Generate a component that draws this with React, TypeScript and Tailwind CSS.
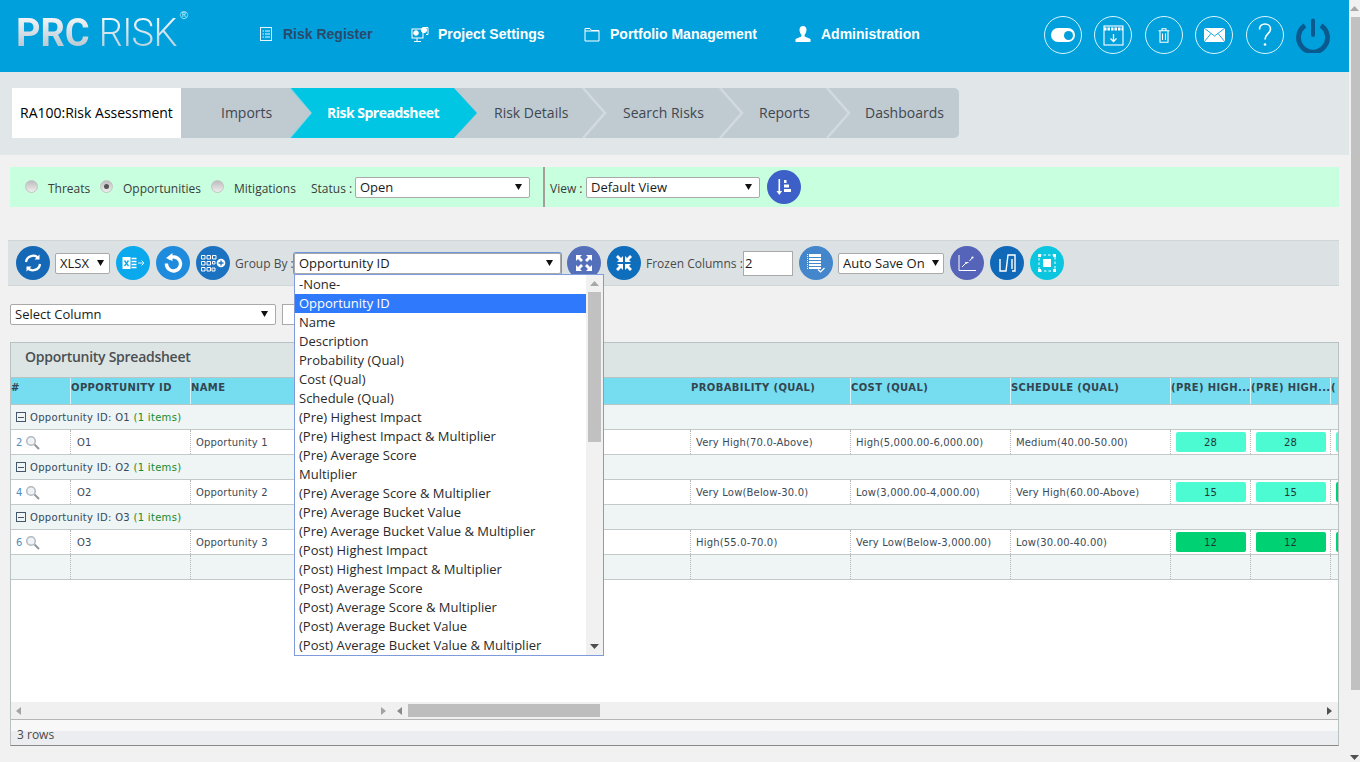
import React from "react";

const OS = "font-['Open_Sans',sans-serif]";

function Select({ value, className, arrowRight = "right-[8px]" }: { value: string; className: string; arrowRight?: string }) {
  return (
    <div className={`relative h-[21px] shrink-0 ${className}`}>
      <select
        defaultValue={value}
        className={`block w-full h-full appearance-none bg-white border border-[#a9a9a9] rounded-[2px] pl-[4px] pb-[1px] text-[13px] text-[#1a1a1a] ${OS}`}
      >
        <option>{value}</option>
      </select>
      <svg className={`absolute top-[7px] pointer-events-none ${arrowRight}`} width="7" height="6" viewBox="0 0 7 6">
        <path d="M0 0h7L3.500 6z" fill="#111" />
      </svg>
    </div>
  );
}

function Round({ color, children, className = "" }: { color: string; children: React.ReactNode; className?: string }) {
  return (
    <button className={`w-[34px] h-[34px] shrink-0 rounded-full flex items-center justify-center ${color} ${className}`}>
      {children}
    </button>
  );
}

function Radio({ on }: { on?: boolean }) {
  return (
    <span className="w-[13px] h-[13px] rounded-full border border-[#c4c4c4] bg-gradient-to-b from-[#bdbdbd] to-[#eeeeee] flex items-center justify-center shrink-0 -mt-[2px]">
      {on && <span className="w-[5px] h-[5px] rounded-full bg-[#555]" />}
    </span>
  );
}

function HeadCircle({ children }: { children: React.ReactNode }) {
  return (
    <button className="w-[38px] h-[38px] shrink-0 rounded-full border-[1.500px] border-[#d8f6ff] flex items-center justify-center">
      {children}
    </button>
  );
}

function Tab({ label, width, pad, active, lineColor = "#d2dae0", last }: { label: string; width: string; pad: string; active?: boolean; lineColor?: string; last?: boolean }) {
  return (
    <div className={`relative h-full flex items-center shrink-0 ${width} ${pad} ${active ? "z-10" : ""}`}>
      {active && (
        <svg className="absolute left-0 top-0" width="187" height="50" viewBox="0 0 187 50">
          <path d="M0 0H163L186 25L163 50H0L21 25z" fill="#00c6e3" />
        </svg>
      )}
      <span className={`relative -mt-[2px] text-[14px] whitespace-nowrap ${OS} ${active ? "text-white font-bold tracking-[-0.5px]" : "text-[#3f4750] font-medium tracking-[0px]"}`}>{label}</span>
      {!last && !active && (
        <svg className="absolute -right-[25px] top-0 z-[5]" width="26" height="50" viewBox="0 0 26 50">
          <path d="M1 0L23 25L1 50" fill="none" stroke={lineColor} strokeWidth="2.500" />
        </svg>
      )}
    </div>
  );
}

const cols = [
  "w-[60px]",
  "w-[120px]",
  "w-[160px]",
  "w-[340px]",
  "w-[160px]",
  "w-[160px]",
  "w-[160px]",
  "w-[80px]",
  "w-[80px]",
  "w-[7px]",
];

const heads = ["#", "OPPORTUNITY ID", "NAME", "", "PROBABILITY (QUAL)", "COST (QUAL)", "SCHEDULE (QUAL)", "(PRE) HIGH...", "(PRE) HIGH...", "("];

const DV = "font-['DejaVu_Sans',Verdana,sans-serif]";

function Group({ id }: { id: string }) {
  return (
    <div className="h-[25px] shrink-0 bg-[#eff4f4] border-b border-[#c4c9c9] flex items-center pl-[5px]">
      <span className="w-[10px] h-[10px] border border-[#46566a] flex items-center justify-center mr-[4px]">
        <span className="w-[6px] h-px bg-[#46566a]" />
      </span>
      <span className={`text-[10px] tracking-[0.3px] text-[#32495c] ${DV}`}>
        Opportunity ID: {id} <span className="text-[#168a2a]">(1 items)</span>
      </span>
    </div>
  );
}

function Mag() {
  return (
    <svg width="15" height="15" viewBox="0 0 15 15" className="ml-[2px]">
      <circle cx="6" cy="6" r="4.300" fill="#eef3f7" stroke="#b4b9bf" strokeWidth="1.500" />
      <path d="M9.500 9.500L14 14" stroke="#8f969c" strokeWidth="2" />
    </svg>
  );
}

function DataRow({ n, id, name, prob, cost, sched, val, color, last }: { n: string; id: string; name: string; prob: string; cost: string; sched: string; val: string; color: string; last: string }) {
  const cell = `h-full border-r border-dotted border-[#b5b5b5] shrink-0 flex items-center text-[10px] tracking-[0.17px] text-[#3c4a57] ${DV}`;
  return (
    <div className="h-[25px] shrink-0 bg-white border-b border-[#c4c9c9] flex">
      <div className={`${cell} ${cols[0]} pl-[5px]`}>
        <span className="text-[#4a8fc0]">{n}</span>
        <Mag />
      </div>
      <div className={`${cell} ${cols[1]} pl-[6px]`}>{id}</div>
      <div className={`${cell} ${cols[2]} pl-[5px]`}>{name}</div>
      <div className={`${cell} ${cols[3]} pl-[5px]`} />
      <div className={`${cell} ${cols[4]} pl-[5px]`}>{prob}</div>
      <div className={`${cell} ${cols[5]} pl-[5px]`}>{cost}</div>
      <div className={`${cell} ${cols[6]} pl-[5px]`}>{sched}</div>
      <div className={`${cell} ${cols[7]} justify-center`}>
        <span className={`w-[70px] h-[20px] rounded-[2px] flex items-center justify-center text-[#1d3a3a] ${color}`}>{val}</span>
      </div>
      <div className={`${cell} ${cols[8]} justify-center`}>
        <span className={`w-[70px] h-[20px] rounded-[2px] flex items-center justify-center text-[#1d3a3a] ${color}`}>{val}</span>
      </div>
      <div className={`h-full shrink-0 overflow-hidden pl-[5px] flex items-center ${cols[9]}`}>
        <span className={`w-[2px] shrink-0 h-[20px] rounded-l-[2px] ${last}`} />
      </div>
    </div>
  );
}

const options = [
  "-None-",
  "Opportunity ID",
  "Name",
  "Description",
  "Probability (Qual)",
  "Cost (Qual)",
  "Schedule (Qual)",
  "(Pre) Highest Impact",
  "(Pre) Highest Impact & Multiplier",
  "(Pre) Average Score",
  "Multiplier",
  "(Pre) Average Score & Multiplier",
  "(Pre) Average Bucket Value",
  "(Pre) Average Bucket Value & Multiplier",
  "(Post) Highest Impact",
  "(Post) Highest Impact & Multiplier",
  "(Post) Average Score",
  "(Post) Average Score & Multiplier",
  "(Post) Average Bucket Value",
  "(Post) Average Bucket Value & Multiplier",
];

function NavItem({ icon, label, active, gap }: { icon: React.ReactNode; label: string; active?: boolean; gap: string }) {
  return (
    <div className={`flex items-center ${gap}`}>
      <span className="w-[20px] h-[20px] flex items-center justify-center shrink-0">{icon}</span>
      <span className={`text-[14px] font-bold whitespace-nowrap font-['Liberation_Sans',Arial,sans-serif] ${active ? "text-[#2b4a6b]" : "text-white"}`}>{label}</span>
    </div>
  );
}

export default function App() {
  return (
    <div className={`w-[1360px] h-[762px] overflow-hidden flex bg-[#f1f1f1] ${OS}`}>
      <div className="w-[1349px] shrink-0 flex flex-col">
        {/* Header */}
        <header className="h-[72px] shrink-0 bg-[#00a0dc] flex items-center relative">
          <div className="w-[256px] shrink-0 pl-[16px] -mt-[6px] flex items-start">
            <span className="text-[38px] leading-[44px] font-bold text-transparent bg-clip-text bg-gradient-to-b from-white to-[#a9bcc8] font-['Roboto',sans-serif]">PRC</span>
            <span className="text-[38px] leading-[44px] font-light tracking-[-0.7px] text-transparent bg-clip-text bg-gradient-to-b from-white to-[#a9c8d8] ml-[9px] font-['Roboto',sans-serif]">RISK</span>
            <span className="text-[11px] leading-[11px] text-[#d5eef8] -mt-[1px] ml-[3px] font-['Liberation_Sans',sans-serif]">®</span>
          </div>
          <nav className="flex items-center -mt-[4px]">
            <NavItem
              gap="gap-[7px] w-[154px]"
              active
              label="Risk Register"
              icon={
                <svg width="14" height="16" viewBox="0 0 14 16" fill="none" stroke="#e6f7ff" strokeWidth="1">
                  <rect x="1.500" y="1.500" width="11" height="13" />
                  <path d="M3.500 5h1.500M6 5h5M3.500 8h1.500M6 8h5M3.500 11h1.500M6 11h5" />
                </svg>
              }
            />
            <NavItem
              gap="gap-[8px] w-[172px]"
              label="Project Settings"
              icon={
                <svg width="18" height="17" viewBox="0 0 18 17" fill="none" stroke="#fff" strokeWidth="1">
                  <rect x="1" y="3" width="11" height="9" />
                  <circle cx="5" cy="7" r="2.300" fill="#fff" />
                  <circle cx="13" cy="4" r="2.600" fill="#fff" />
                  <path d="M14 1.500h3v7h-2M6 12v3M3 15.500h7" />
                </svg>
              }
            />
            <NavItem
              gap="gap-[8px] w-[211px]"
              label="Portfolio Management"
              icon={
                <svg width="16" height="16" viewBox="0 0 16 16" fill="none" stroke="#fff" strokeWidth="1">
                  <path d="M1 15V2.500h5l1.500 2H15V15z" />
                  <path d="M1 5h14" />
                </svg>
              }
            />
            <NavItem
              gap="gap-[8px]"
              label="Administration"
              icon={
                <svg width="16" height="16" viewBox="0 0 16 16" fill="#fff">
                  <path d="M8 0c2.200 0 3.500 1.700 3.500 3.800S10.200 8.500 9.500 9l.2 1.500L15.500 13v3H.5v-3l5.800-2.500L6.500 9C5.800 8.500 4.500 6 4.500 3.800S5.800 0 8 0z" />
                </svg>
              }
            />
          </nav>
          <div className="ml-auto mr-[19px] -mt-[2px] flex items-center gap-[12.500px]">
            <HeadCircle>
              <span className="w-[24px] h-[14px] bg-white rounded-full flex items-center justify-end pr-[2px]">
                <span className="w-[9px] h-[9px] rounded-full bg-[#00a0dc]" />
              </span>
            </HeadCircle>
            <HeadCircle>
              <svg width="21" height="21" viewBox="0 0 21 21" fill="none" stroke="#fff" strokeWidth="1.100">
                <rect x="1" y="1" width="19" height="19" />
                <path d="M1 4h19" strokeWidth="3" strokeDasharray="2.500 1" />
                <path d="M10.500 9v7M7.500 13.500l3 3 3-3" strokeWidth="1.300" />
              </svg>
            </HeadCircle>
            <HeadCircle>
              <svg width="12" height="15" viewBox="0 0 12 15" fill="none" stroke="#fff" strokeWidth="1.100">
                <path d="M.5 2.800h11M4 2.800V.8h4v2M2 3v11.200h8V3M4.500 5.500v6.500M7.500 5.500v6.500" />
              </svg>
            </HeadCircle>
            <HeadCircle>
              <svg width="21" height="14" viewBox="0 0 21 14">
                <rect x="0" y="0" width="21" height="14" fill="#fff" />
                <path d="M0 0l10.500 8L21 0M0 14l7-8.500M21 14l-7-8.500" fill="none" stroke="#00a0dc" strokeWidth="0.900" />
              </svg>
            </HeadCircle>
            <HeadCircle>
              <svg width="14" height="24" viewBox="0 0 14 24" fill="none" stroke="#fff" strokeWidth="1.600" aria-label="?">
                <path d="M1.500 6.500C1.500 3 4 1 7 1s5.500 2 5.500 5c0 4.500-5.500 5-5.500 10.500" />
                <circle cx="7" cy="21.500" r="1.300" fill="#fff" stroke="none" />
              </svg>
            </HeadCircle>
            <svg width="34" height="35" viewBox="0 0 34 35" fill="none" stroke="#0a5a90" strokeWidth="4.800" className="shrink-0">
              <path d="M9 7.500A14.500 14.500 0 1 0 25 7.500" />
              <path d="M17 2.500V17" strokeLinecap="round" strokeWidth="4" />
            </svg>
          </div>
        </header>

        {/* Tabs band */}
        <div className="h-[83px] shrink-0 bg-[#e1e6e8] pt-[16px] pl-[12px]">
          <div className="h-[50px] w-[947px] flex rounded-[5px] bg-[#bfcad1]">
            <div className="w-[169px] h-full bg-white flex items-center pl-[8px] shrink-0">
              <span className="-mt-[2px] text-[14px] font-medium text-black whitespace-nowrap">RA100:Risk Assessment</span>
            </div>
            <Tab label="Imports" width="w-[110px]" pad="pl-[40px]" lineColor="#6cd8ea" />
            <Tab label="Risk Spreadsheet" width="w-[163px]" pad="pl-[36px]" active />
            <Tab label="Risk Details" width="w-[129px]" pad="pl-[40px]" />
            <Tab label="Search Risks" width="w-[137px]" pad="pl-[40px]" />
            <Tab label="Reports" width="w-[107px]" pad="pl-[39px]" />
            <Tab label="Dashboards" width="w-[132px]" pad="pl-[38px]" last />
          </div>
        </div>

        {/* Filter bar */}
        <div className="mt-[12px] ml-[10px] w-[1329px] h-[40px] shrink-0 bg-[#c8ffdf] flex items-center text-[12px] text-[#3b3b3b]">
          <div className="flex items-center pl-[15px] w-[533px] shrink-0">
            <Radio />
            <span className="ml-[10px] w-[52px] mt-[3px]">Threats</span>
            <Radio on />
            <span className="ml-[10px] w-[88px] mt-[3px]">Opportunities</span>
            <Radio />
            <span className="ml-[10px] w-[77px] mt-[3px]">Mitigations</span>
            <span className="w-[44px] whitespace-nowrap mt-[3px]">Status :</span>
            <Select value="Open" className="w-[175px]" />
          </div>
          <div className="w-[2px] h-full bg-[#a89c98] shrink-0" />
          <span className="ml-[5px] w-[36px] whitespace-nowrap mt-[3px]">View :</span>
          <Select value="Default View" className="w-[174px]" />
          <Round color="bg-[#3c60c8]" className="ml-[7px]">
            <svg width="18" height="18" viewBox="0 0 18 18" fill="#fff">
              <path d="M3.500 1h1.600v12h2l-2.800 4-2.800-4h2z" />
              <path d="M9 2h2.500v3H9zM9 6.500h5v3H9zM9 11h7v3H9z" />
            </svg>
          </Round>
        </div>

        {/* Toolbar */}
        <div className="mt-[33px] ml-[8px] w-[1331px] h-[46px] shrink-0 bg-[#dce2e4] border-y border-[#cfd6d8] flex items-center pl-[8px] text-[12px] text-[#4a4a4a]">
          <Round color="bg-[#1468b5]">
            <svg width="20" height="20" viewBox="0 0 20 20" fill="none" stroke="#fff" strokeWidth="2.300">
              <path d="M3 9a7 7 0 0 1 12.500-3.500M17 11a7 7 0 0 1-12.500 3.500" />
              <path d="M16.500 1.500v5h-5zM3.500 18.500v-5h5z" fill="#fff" strokeWidth="0" />
            </svg>
          </Round>
          <Select value="XLSX" className="w-[55px] ml-[5px]" arrowRight="right-[6px]" />
          <Round color="bg-[#0aa8ec]" className="ml-[6px]">
            <svg width="23" height="18" viewBox="0 0 23 18" fill="none">
              <rect x="0.500" y="3" width="8" height="12" fill="#fff" />
              <path d="M2.500 6.500l4 5.500M6.500 6.500l-4 5.500" stroke="#0aa8ec" strokeWidth="1.300" />
              <path d="M9.500 4.500h5M9.500 7.500h5M9.500 10.500h5M9.500 13.500h5" stroke="#fff" strokeWidth="1.500" />
              <path d="M16 9h6M19.500 6.500L22 9l-2.500 2.500" stroke="#d9f3fd" strokeWidth="1" />
            </svg>
          </Round>
          <Round color="bg-[#1f8bdc]" className="ml-[6px]">
            <svg width="20" height="20" viewBox="0 0 20 20" fill="none">
              <path d="M5.500 6a7 7 0 1 1-2 4.500" stroke="#fff" strokeWidth="3.400" />
              <path d="M9.500 0v8L3 5z" fill="#fff" />
            </svg>
          </Round>
          <Round color="bg-[#1a72c0]" className="ml-[6px]">
            <svg width="25" height="17" viewBox="0 0 25 17" fill="none" stroke="#fff" strokeWidth="1">
              <path d="M.5.500h3.500v3.500H.5zM6 .5h3.500v3.500H6zM11.500.5H15v3.500h-3.500zM.5 6.500h3.500V10H.5zM6 6.500h3.500V10H6zM11.500 6.500H14V9h-2.500zM.5 12.500h3.500V16H.5zM6 12.500h3.500V16H6zM11 13h3v3h-3z" />
              <circle cx="20" cy="8" r="4.300" fill="#fff" stroke="none" />
              <path d="M17.500 8h5M20 5.500v5" stroke="#1a72c0" strokeWidth="1.300" />
            </svg>
          </Round>
          <span className="ml-[5px] w-[59px] whitespace-nowrap mt-[1px]">Group By :</span>
          <div className="relative shrink-0 w-[267px] h-[21px]">
            <div className="rounded-[2px] shadow-[0_0_0_1px_#6d94dd]">
              <Select value="Opportunity ID" className="w-full" />
            </div>
            <div className={`absolute left-0 top-[21px] w-[310px] h-[382px] z-30 bg-white border border-[#7f9bdc] flex text-[#2a2a2a] text-[13px] ${OS}`}>
              <ul className="flex-1 min-w-0">
                {options.map((o, i) => (
                  <li key={o} className={`h-[19px] leading-[18px] pl-[4px] whitespace-nowrap ${i === 1 ? "bg-[#2f7afc] text-white" : ""}`}>{o}</li>
                ))}
              </ul>
              <div className="w-[17px] bg-[#f1f1f1] flex flex-col items-center relative shrink-0">
                <svg className="mt-[6px]" width="9" height="5" viewBox="0 0 9 5"><path d="M0 5L4.500 0 9 5z" fill="#a8a8a8" /></svg>
                <div className="mt-[6px] w-[13px] h-[150px] bg-[#c1c1c1]" />
                <svg className="mt-auto mb-[6px]" width="9" height="5" viewBox="0 0 9 5"><path d="M0 0h9L4.500 5z" fill="#505050" /></svg>
              </div>
            </div>
          </div>
          <Round color="bg-[#5470ba]" className="ml-[6px]">
            <svg width="20" height="20" viewBox="0 0 20 20" fill="#fff">
              <path d="M2 2h6L6 4l3 3-2 2-3-3-2 2zM18 2v6l-2-2-3 3-2-2 3-3-2-2zM2 18v-6l2 2 3-3 2 2-3 3 2 2zM18 18h-6l2-2-3-3 2-2 3 3 2-2z" />
            </svg>
          </Round>
          <Round color="bg-[#0f6ebc]" className="ml-[6px]">
            <svg width="20" height="20" viewBox="0 0 20 20" fill="#fff">
              <path d="M9 9H3l2-2-3-3 2-2 3 3 2-2zM11 9V3l2 2 3-3 2 2-3 3 2 2zM9 11v6l-2-2-3 3-2-2 3-3-2-2zM11 11h6l-2 2 3 3-2 2-3-3-2 2z" />
            </svg>
          </Round>
          <span className="ml-[5px] w-[97px] whitespace-nowrap mt-[1px]">Frozen Columns :</span>
          <input defaultValue="2" className={`w-[50px] h-[25px] shrink-0 bg-white border border-[#a9a9a9] pl-[1px] text-[13px] text-[#1a1a1a] ${OS}`} />
          <Round color="bg-[#4386cb]" className="ml-[6px]">
            <svg width="20" height="20" viewBox="0 0 20 20" fill="none">
              <rect x="3" y="1" width="12" height="15" fill="#fff" />
              <path d="M1.500 1v15" stroke="#fff" strokeWidth="1" strokeDasharray="1 1" />
              <path d="M3 4.500h12M3 7.500h12M3 10.500h12M3 13.500h12" stroke="#4386cb" strokeWidth="1" />
              <path d="M12 16.500l2.500 2.500 4-4" stroke="#fff" strokeWidth="1.200" />
            </svg>
          </Round>
          <Select value="Auto Save On" className="w-[106px] ml-[5px]" arrowRight="right-[5px]" />
          <Round color="bg-[#5564b8]" className="ml-[6px]">
            <svg width="20" height="18" viewBox="0 0 20 18" fill="none" stroke="#fff" strokeWidth="1">
              <path d="M2 1v15.500h17" />
              <path d="M5 13l3.500-3.500M10 8.500h1.500M12.500 7l2.500-3" />
              <circle cx="9" cy="9" r="1.100" fill="#fff" stroke="none" />
              <circle cx="15.500" cy="3.500" r="1.100" fill="#fff" stroke="none" />
            </svg>
          </Round>
          <Round color="bg-[#0f69b8]" className="ml-[6px]">
            <svg width="20" height="18" viewBox="0 0 20 18" fill="none" stroke="#fff" strokeWidth="1.400">
              <path d="M3 5v12h6l2-16h7v16h-3" />
              <path d="M15 5v10" />
            </svg>
          </Round>
          <Round color="bg-[#0cc6e0]" className="ml-[6px]">
            <svg width="20" height="20" viewBox="0 0 20 20" fill="none">
              <rect x="2" y="2" width="16" height="16" stroke="#fff" strokeWidth="1" strokeDasharray="2.500 2" />
              <path d="M1 1h3v3H1zM16 1h3v3h-3zM1 16h3v3H1zM16 16h3v3h-3z" fill="#fff" />
              <rect x="6" y="6" width="8" height="8" fill="#fff" />
            </svg>
          </Round>
        </div>

        {/* Select column */}
        <div className="mt-[18px] ml-[10px] h-[21px] shrink-0 flex">
          <Select value="Select Column" className="w-[266px]" />
          <input className="ml-[6px] w-[60px] h-[21px] bg-white border border-[#a9a9a9]" />
        </div>

        {/* Panel */}
        <section className="mt-[17px] ml-[10px] w-[1329px] h-[404px] shrink-0 border border-[#b9c2c2] border-b-[#888] flex flex-col overflow-hidden bg-white relative">
          <div className="h-[34px] shrink-0 bg-[#dde5e4] flex items-center pl-[14px] pb-[8px] text-[14px] font-semibold tracking-[-0.27px] text-[#4a4f52]">Opportunity Spreadsheet</div>
          <div className="h-[28px] shrink-0 bg-[#76dcef] border-y border-[#b9c5c5] flex">
            {heads.map((h, i) => (
              <div key={i} className={`h-full shrink-0 pt-[2px] text-[10px] leading-[16px] font-bold tracking-[0.38px] text-[#34454f] overflow-hidden whitespace-nowrap ${cols[i]} ${DV} ${h && i < 9 ? "border-r border-[#d8f4fa]" : ""}`}>{h}</div>
            ))}
          </div>
          <Group id="O1" />
          <DataRow n="2" id="O1" name="Opportunity 1" prob="Very High(70.0-Above)" cost="High(5,000.00-6,000.00)" sched="Medium(40.00-50.00)" val="28" color="bg-[#4dfbd2]" last="bg-[#4dfbd2]" />
          <Group id="O2" />
          <DataRow n="4" id="O2" name="Opportunity 2" prob="Very Low(Below-30.0)" cost="Low(3,000.00-4,000.00)" sched="Very High(60.00-Above)" val="15" color="bg-[#4dfbd2]" last="bg-[#00d173]" />
          <Group id="O3" />
          <DataRow n="6" id="O3" name="Opportunity 3" prob="High(55.0-70.0)" cost="Very Low(Below-3,000.00)" sched="Low(30.00-40.00)" val="12" color="bg-[#00d173]" last="bg-[#00d173]" />
          <div className="h-[25px] shrink-0 bg-[#eff4f4] border-b border-[#c4c9c9] flex">
            {cols.map((c, i) => (
              <div key={i} className={`h-full shrink-0 ${i < 9 ? "border-r border-dotted border-[#b5b5b5]" : ""} ${c}`} />
            ))}
          </div>
          <div className="flex-1 bg-white" />
          {/* Horizontal scrollbars */}
          <div className="h-[17px] shrink-0 bg-[#f0f0f0] flex items-center relative">
            <svg className="ml-[5px]" width="5" height="8" viewBox="0 0 5 8"><path d="M5 0v8L0 4z" fill="#a3a3a3" /></svg>
            <svg className="ml-[360px]" width="5" height="8" viewBox="0 0 5 8"><path d="M0 0v8l5-4z" fill="#a3a3a3" /></svg>
            <svg className="ml-[11px]" width="5" height="8" viewBox="0 0 5 8"><path d="M5 0v8L0 4z" fill="#8a8a8a" /></svg>
            <div className="ml-[6px] w-[192px] h-[13px] bg-[#bdbdbd]" />
            <svg className="ml-auto mr-[6px]" width="5" height="8" viewBox="0 0 5 8"><path d="M0 0v8l5-4z" fill="#505050" /></svg>
          </div>
          <div className="h-[26px] shrink-0 border-t border-[#b5b5b5] bg-gradient-to-b from-[#f8f8f8] from-45% to-[#ecedf0] to-45% flex items-center pl-[6px] pt-[4px] text-[12px] text-[#4a4a4a]">3 rows</div>
        </section>
      </div>

      {/* Page scrollbar */}
      <div className="w-[11px] shrink-0 bg-[#f1f1f1] flex flex-col items-end relative">
        <svg className="mt-[6px] mr-[1px]" width="9" height="5" viewBox="0 0 9 5"><path d="M0 5L4.500 0 9 5z" fill="#a8a8a8" /></svg>
        <div className="mt-[6px] w-[9px] h-[673px] bg-[#c1c1c1]" />
        <svg className="mt-auto mb-[2px] mr-[1px]" width="9" height="5" viewBox="0 0 9 5"><path d="M0 0h9L4.500 5z" fill="#505050" /></svg>
      </div>
    </div>
  );
}
